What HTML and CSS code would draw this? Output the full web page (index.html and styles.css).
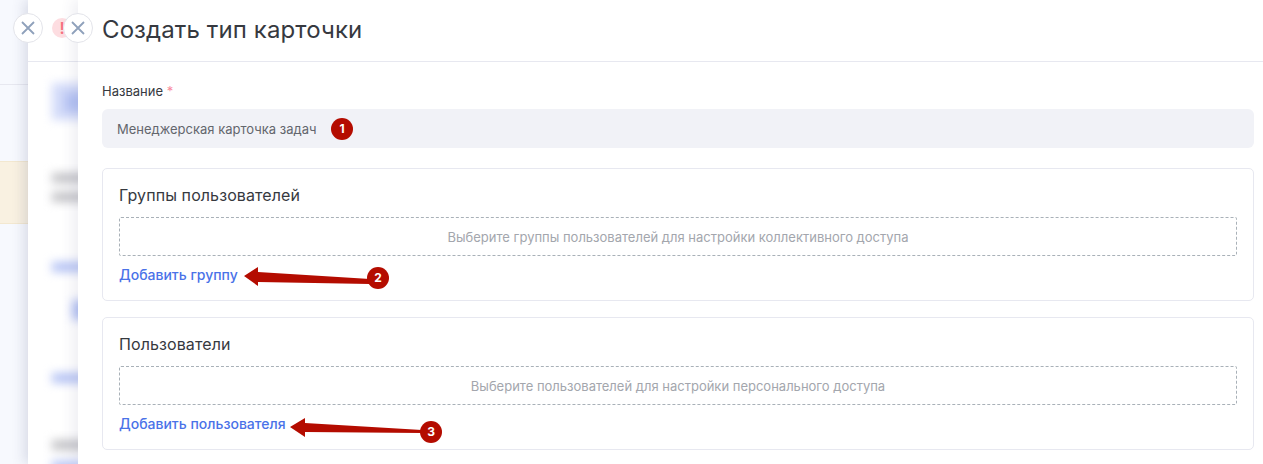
FILE: index.html
```html
<!DOCTYPE html>
<html lang="ru">
<head>
  <meta charset="UTF-8">
  <title>Создать тип карточки</title>
  <link rel="stylesheet" href="styles.css">
</head>
<body>
  <div class="basePage">
    <div class="baseHead"></div>
    <div class="baseBand"></div>
  </div>

  <!-- first drawer, blurred behind the second -->
  <div class="backDrawer">
    <div class="backHead">
      <span class="alertDot">!</span>
    </div>
    <div class="backBody">
      <div class="backTab"><div class="backTabInner"></div></div>
      <div class="smear smearGrey smearWarn1"></div>
      <div class="smear smearGrey smearWarn2"></div>
      <div class="smear smearBlue smearLink1"></div>
      <div class="smear smearBox"></div>
      <div class="smear smearBlue smearLink2"></div>
      <div class="smear smearGrey smearLast"></div>
      <div class="smear smearBlue smearEnd"></div>
    </div>
  </div>

  <button class="closeBtn closeBack" aria-label="Закрыть">
    <svg width="16" height="16" viewBox="0 0 16 16"><path d="M2 2L14 14M14 2L2 14"/></svg>
  </button>

  <div class="drawer">
    <button class="closeBtn closeFront" aria-label="Закрыть">
      <svg width="16" height="16" viewBox="0 0 16 16"><path d="M2 2L14 14M14 2L2 14"/></svg>
    </button>
    <div class="drawerHead">
      <h1>Создать тип карточки</h1>
    </div>
    <div class="drawerBody">
      <label class="fieldLabel">Название <span class="req">*</span></label>
      <div class="inputBox">
        <span>Менеджерская карточка задач</span>
        <span class="step step1">1</span>
      </div>

      <section class="accessCard">
        <h2>Группы пользователей</h2>
        <div class="emptyBox">Выберите группы пользователей для настройки коллективного доступа</div>
        <div class="addRow">
          <a class="addLink">Добавить группу</a>
          <svg class="arrow arrow2" width="128" height="24" viewBox="0 0 128 24"><path d="M0 11L14 2L14 7L126 14L126 19L14 17L14 21Z"/></svg>
          <span class="step step2">2</span>
        </div>
      </section>

      <section class="accessCard">
        <h2>Пользователи</h2>
        <div class="emptyBox">Выберите пользователей для настройки персонального доступа</div>
        <div class="addRow">
          <a class="addLink">Добавить пользователя</a>
          <svg class="arrow arrow3" width="134" height="24" viewBox="0 0 134 24"><path d="M0 13L15 4L15 9L132 16L132 19L15 18L15 23Z"/></svg>
          <span class="step step3">3</span>
        </div>
      </section>
    </div>
  </div>
</body>
</html>
```

FILE: styles.css
```css
* {
  box-sizing: border-box;
}

body {
  margin: 0;
  height: 464px;
  overflow: hidden;
  position: relative;
  font-family: Inter, "Noto Sans", sans-serif;
  color: #36393f;
  background: #f7f9fe;
}

.basePage {
  width: 28px;
  height: 100%;
}

.baseHead {
  height: 85px;
  border-bottom: 1px solid #e7e8f0;
}

.baseBand {
  height: 63px;
  margin-top: 76px;
  background: #f9f1e1;
  border-top: 1px solid #f3e8d0;
  border-bottom: 1px solid #f3e8d0;
}

.backDrawer {
  position: absolute;
  left: 28px;
  top: 0;
  bottom: 0;
  width: 60px;
  background: #fff;
  box-shadow: -4px 0 12px rgba(60, 70, 110, 0.16);
}

.backHead {
  height: 62px;
  border-bottom: 1px solid #e7e8f0;
  position: relative;
}

.alertDot {
  position: absolute;
  left: 24px;
  top: 18px;
  width: 20px;
  height: 20px;
  border-radius: 50%;
  background: #fddde1;
  color: #f7717f;
  font-size: 16px;
  font-weight: 600;
  line-height: 20px;
  text-align: center;
}

.backBody {
  position: relative;
  height: 402px;
  filter: blur(5px);
}

.backTab {
  position: absolute;
  left: 24px;
  top: 21px;
  width: 40px;
  height: 37px;
  background: #d3dbf9;
}

.backTabInner {
  margin: 10px 0 0 13px;
  width: 27px;
  height: 18px;
  background: #b4c2f4;
}

.smear {
  position: absolute;
  left: 24px;
  width: 40px;
  height: 10px;
}

.smearGrey {
  background: #c2c2c6;
}

.smearBlue {
  background: #b4c2f4;
}

.smearWarn1 {
  top: 111px;
}

.smearWarn2 {
  top: 130px;
}

.smearLink1 {
  top: 200px;
}

.smearBox {
  top: 238px;
  left: 44px;
  height: 20px;
  background: #b4c2f4;
}

.smearLink2 {
  top: 311px;
}

.smearLast {
  top: 378px;
}

.smearEnd {
  top: 399px;
}

.closeBtn {
  position: absolute;
  width: 30px;
  height: 30px;
  top: 13px;
  padding: 0;
  border: 1px solid #e3e4ea;
  border-radius: 50%;
  background: #fff;
  display: flex;
  align-items: center;
  justify-content: center;
  z-index: 3;
}

.closeBtn path {
  fill: none;
  stroke: #8fa1bb;
  stroke-width: 1.8;
}

.closeBack {
  left: 13px;
}

.closeFront {
  left: -15px;
}

.drawer {
  position: absolute;
  left: 78px;
  top: 0;
  right: 0;
  bottom: 0;
  background: #fff;
  box-shadow: -6px 0 12px rgba(60, 70, 110, 0.08);
}

.drawerHead {
  height: 62px;
  padding: 0 24px 3px;
  display: flex;
  align-items: center;
  border-bottom: 1px solid #e7e8f0;
}

h1 {
  margin: 0;
  font-size: 24px;
  font-weight: 400;
  letter-spacing: 0.1px;
  color: #36393f;
}

.drawerBody {
  padding: 21px 9px 0 24px;
}

.fieldLabel {
  display: block;
  height: 17px;
  font-size: 13px;
  line-height: 17px;
  margin-bottom: 9px;
}

.req {
  color: #f98a9c;
}

.inputBox {
  height: 39px;
  padding: 0 15px;
  display: flex;
  align-items: center;
  background: #f1f2f7;
  border-radius: 6px;
  font-size: 13px;
  color: #63666d;
  margin-bottom: 20px;
}

.step {
  position: absolute;
  width: 22px;
  height: 22px;
  border-radius: 50%;
  background: #b40c00;
  color: #fff;
  font-size: 12px;
  font-weight: 700;
  line-height: 22px;
  text-align: center;
}

.step1 {
  left: 253px;
  top: 118px;
}

.accessCard {
  height: 133px;
  padding: 17px 16px 0;
  border: 1px solid #e7e8f0;
  border-radius: 5px;
  margin-bottom: 16px;
}

h2 {
  margin: 0 0 12px;
  height: 19px;
  font-size: 16px;
  font-weight: 400;
  letter-spacing: 0.1px;
  line-height: 19px;
  color: #36393f;
}

.emptyBox {
  height: 39px;
  border: 1px dashed #a9b1b8;
  border-radius: 2px;
  display: flex;
  align-items: center;
  justify-content: center;
  font-size: 13px;
  color: #a3a6ad;
}

.addRow {
  position: relative;
  margin-top: 9px;
  height: 18px;
  display: flex;
  align-items: center;
}

.addLink {
  font-size: 14px;
  font-weight: 500;
  color: #4a72e8;
}

.arrow {
  position: absolute;
  top: 0;
  fill: #b40c00;
}

.arrow2 {
  left: 125px;
}

.arrow3 {
  left: 171px;
}

.addRow .step2 {
  left: 248px;
  top: 2px;
}

.addRow .step3 {
  left: 301px;
  top: 7px;
}
```
